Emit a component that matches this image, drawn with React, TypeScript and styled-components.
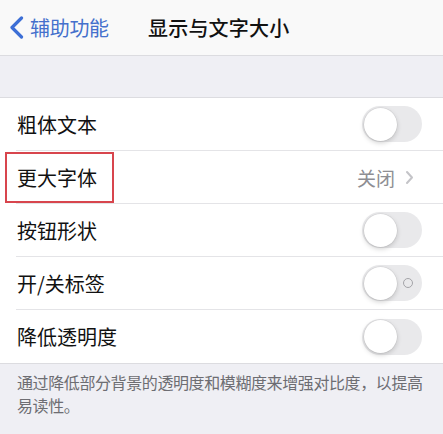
import React from 'react';
import styled, { createGlobalStyle } from 'styled-components';

const GlobalStyle = createGlobalStyle`
  html, body {
    margin: 0;
    padding: 0;
    background: #efeff4;
  }
  body {
    font-family: 'Noto Sans CJK SC', 'Noto Sans', sans-serif;
    -webkit-font-smoothing: antialiased;
  }
`;

interface Row {
  label: string;
  kind: 'toggle' | 'link';
  value?: string;
  labels?: boolean;
  highlight?: boolean;
}

const rows: Row[] = [
  { label: '粗体文本', kind: 'toggle' },
  { label: '更大字体', kind: 'link', value: '关闭', highlight: true },
  { label: '按钮形状', kind: 'toggle' },
  { label: '开/关标签', kind: 'toggle', labels: true },
  { label: '降低透明度', kind: 'toggle' },
];

const App: React.FC = () => {
  return (
    <Page>
      <GlobalStyle />
      <NavBar>
        <BackButton>
          <svg width="15" height="23" viewBox="0 0 15 23">
            <path
              d="M12.5 2 L3 11.5 L12.5 21"
              fill="none"
              stroke="#3d6fd6"
              strokeWidth="3.2"
              strokeLinecap="round"
              strokeLinejoin="round"
            />
          </svg>
          <BackText>辅助功能</BackText>
        </BackButton>
        <Title>显示与文字大小</Title>
      </NavBar>
      <Spacer />
      <Group>
        {rows.map((row, i) => (
          <Cell key={row.label} last={i === rows.length - 1}>
            <Label highlight={row.highlight}>{row.label}</Label>
            {row.kind === 'toggle' ? (
              <Switch>
                <Knob />
                {row.labels && <OffMark />}
              </Switch>
            ) : (
              <Detail>
                <Value>{row.value}</Value>
                <svg width="9" height="15" viewBox="0 0 9 15">
                  <path
                    d="M2 2 L7 7.5 L2 13"
                    fill="none"
                    stroke="#c4c4c8"
                    strokeWidth="2"
                    strokeLinecap="round"
                    strokeLinejoin="round"
                  />
                </svg>
              </Detail>
            )}
          </Cell>
        ))}
      </Group>
      <Footer>通过降低部分背景的透明度和模糊度来增强对比度，以提高易读性。</Footer>
    </Page>
  );
};

export default App;

const Page = styled.div`
  width: 443px;
  height: 434px;
  overflow: hidden;
  background: #efeff4;
`;

const NavBar = styled.div`
  height: 56px;
  box-sizing: border-box;
  background: #f9f9f9;
  border-bottom: 1px solid #dcdce0;
  display: flex;
  align-items: center;
  padding: 0 0 0 9px;
`;

const BackButton = styled.div`
  display: flex;
  align-items: center;
  gap: 6px;
  width: 139px;
`;

const BackText = styled.span`
  font-size: 20px;
  color: #4470cc;
  letter-spacing: -0.3px;
`;

const Title = styled.div`
  font-size: 20px;
  font-weight: 500;
  color: #111;
  letter-spacing: 0.2px;
`;

const Spacer = styled.div`
  height: 41px;
  border-bottom: 1px solid #dcdce0;
`;

const Group = styled.div`
  background: #fff;
  border-bottom: 1px solid #dcdce0;
`;

const Cell = styled.div<{ last?: boolean }>`
  position: relative;
  height: 53px;
  box-sizing: border-box;
  display: flex;
  align-items: center;
  justify-content: space-between;
  margin-left: 16px;
  padding-right: 21px;
  border-bottom: ${({ last }) => (last ? 'none' : '1px solid #e4e4e7')};
`;

const Label = styled.div<{ highlight?: boolean }>`
  font-size: 20px;
  color: #111;
  padding-left: 1px;
  &::before {
    content: '';
    display: ${({ highlight }) => (highlight ? 'block' : 'none')};
    position: absolute;
    left: -11px;
    top: 1px;
    width: 109px;
    height: 51px;
    box-sizing: border-box;
    border: 2px solid #d8454d;
  }
`;

const Switch = styled.div`
  position: relative;
  width: 60px;
  height: 36px;
  border-radius: 18px;
  background: #e9e9eb;
`;

const Knob = styled.div`
  position: absolute;
  left: 1.5px;
  top: 1.5px;
  width: 33px;
  height: 33px;
  border-radius: 50%;
  background: #fff;
  box-shadow: 0 2px 5px rgba(0, 0, 0, 0.18), 0 0 0 0.5px rgba(0, 0, 0, 0.08);
`;

const OffMark = styled.div`
  position: absolute;
  right: 9px;
  top: 13px;
  width: 8px;
  height: 8px;
  border-radius: 50%;
  border: 1.2px solid #a4a4a8;
`;

const Detail = styled.div`
  display: flex;
  align-items: center;
  gap: 10px;
  margin-right: 8px;
`;

const Value = styled.span`
  font-size: 19px;
  color: #8e8e93;
`;

const Footer = styled.div`
  padding: 7px 14px 0 17px;
  font-size: 16px;
  line-height: 23px;
  color: #6d6d72;
  letter-spacing: -0.4px;
`;
